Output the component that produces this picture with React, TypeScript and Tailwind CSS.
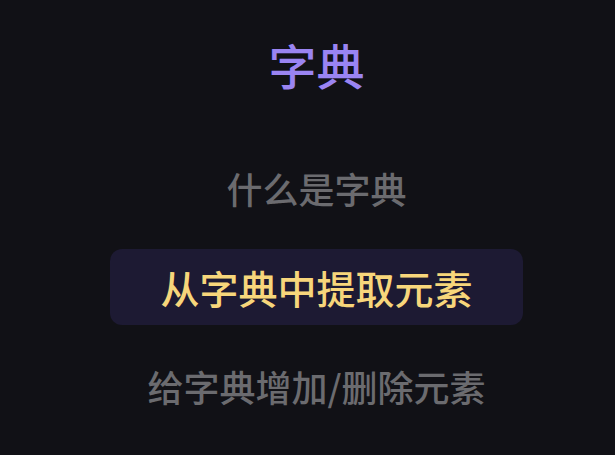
export default function App() {
  return (
    <div
      className="w-[615px] h-[455px] bg-[#111116] flex flex-col items-center overflow-hidden pl-[18px]"
      style={{ fontFamily: '"Noto Sans CJK SC", "Noto Sans", sans-serif' }}
    >
      <h1 className="mt-[40px] text-[48px] leading-[48px] font-medium text-[#9a84f2]">字典</h1>
      <div className="mt-[62px] h-[76px] flex items-center text-[36px] font-medium text-[#6b6b6f]">什么是字典</div>
      <div className="mt-[23px] w-[413px] h-[76px] rounded-[12px] bg-[#1d1a33] flex items-center justify-center text-[39px] font-medium text-[#f7d67b]">
        从字典中提取元素
      </div>
      <div className="mt-[23px] h-[76px] flex items-center text-[36px] font-medium text-[#6b6b6f]">给字典增加/删除元素</div>
    </div>
  );
}
